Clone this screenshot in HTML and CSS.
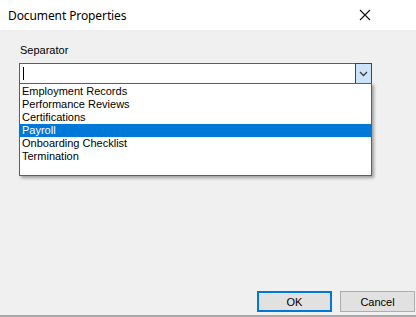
FILE: index.html
```html
<!DOCTYPE html>
<html>
<head>
<meta charset="utf-8">
<link rel="stylesheet" href="styles.css">
</head>
<body>
<div class="window">
  <div class="titlebar">
    <span class="title">Document Properties</span>
    <svg class="close" width="12" height="12" viewBox="0 0 12 12"><path d="M1 1 L11 11 M11 1 L1 11" stroke="#111" stroke-width="1.1" fill="none"/></svg>
  </div>
  <div class="content">
    <div class="label">Separator</div>
    <div class="combo">
      <div class="field">
        <span class="caret"></span>
        <div class="drop-btn">
          <svg width="9" height="6" viewBox="0 0 9 6"><path d="M1 1 L4.5 4.5 L8 1" stroke="#3c3c3c" stroke-width="1.3" fill="none"/></svg>
        </div>
      </div>
      <ul class="list">
        <li>Employment Records</li>
        <li>Performance Reviews</li>
        <li>Certifications</li>
        <li class="selected">Payroll</li>
        <li>Onboarding Checklist</li>
        <li>Termination</li>
      </ul>
    </div>
  </div>
  <div class="footer">
    <button class="btn btn-default">OK</button>
    <button class="btn">Cancel</button>
  </div>
</div>
</body>
</html>
```
FILE: styles.css
```css
html, body {
  margin: 0;
  padding: 0;
}
body {
  width: 416px;
  height: 317px;
  overflow: hidden;
  background: #f0f0f0;
}
.window {
  width: 416px;
  height: 317px;
  display: flex;
  flex-direction: column;
  box-sizing: border-box;
  border-bottom: 2px solid #a9a9a9;
  background: #f0f0f0;
}
.titlebar {
  height: 30px;
  flex: none;
  background: #ffffff;
  display: flex;
  align-items: center;
  justify-content: space-between;
  padding: 0 45px 0 8px;
  box-sizing: border-box;
}
.title {
  font-family: "Noto Sans", sans-serif;
  font-size: 12px;
  color: #000;
  letter-spacing: -0.1px;
}
.close {
  display: block;
  margin-top: 0;
}
.content {
  flex: 1;
  padding: 14px 44px 0 19px;
  font-family: "Liberation Sans", Arial, sans-serif;
  font-size: 11px;
  color: #000;
}
.label {
  line-height: 13px;
  height: 13px;
  padding-left: 1px;
  margin-bottom: 6px;
}
.combo {
  position: relative;
}
.field {
  height: 21px;
  box-sizing: border-box;
  border: 1px solid #0078d7;
  background: #fff;
  display: flex;
  align-items: center;
  justify-content: space-between;
}
.caret {
  width: 1px;
  height: 13px;
  background: #000;
  margin-left: 3px;
}
.drop-btn {
  width: 17px;
  height: 21px;
  margin: -1px -1px -1px 0;
  box-sizing: border-box;
  border: 1px solid #005499;
  background: #cce4f7;
  display: flex;
  align-items: center;
  justify-content: center;
}
.list {
  position: absolute;
  left: 0;
  right: 0;
  top: 20px;
  height: 93px;
  margin: 0;
  padding: 1px 0 0 0;
  list-style: none;
  box-sizing: border-box;
  border: 1px solid #0078d7;
  background: #fff;
  box-shadow: 2px 2px 3px rgba(0, 0, 0, 0.35);
}
.list li {
  height: 13px;
  line-height: 13px;
  padding-left: 2px;
  white-space: nowrap;
}
.list li.selected {
  background: #0078d7;
  color: #fff;
}
.footer {
  flex: none;
  display: flex;
  justify-content: flex-end;
  gap: 8px;
  padding: 0 1px 3px 0;
}
.btn {
  width: 75px;
  height: 21px;
  box-sizing: border-box;
  border: 1px solid #adadad;
  background: #e1e1e1;
  font-family: "Liberation Sans", Arial, sans-serif;
  font-size: 11px;
  color: #000;
  padding: 0;
  margin: 0;
}
.btn-default {
  border: 2px solid #0078d7;
}
```
